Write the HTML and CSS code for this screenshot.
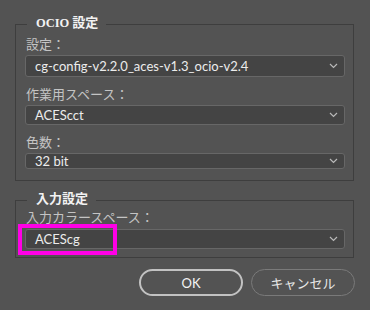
FILE: index.html
```html
<!DOCTYPE html>
<html lang="ja">
<head>
<meta charset="utf-8">
<link rel="stylesheet" href="styles.css">
</head>
<body>
<div class="dialog">
  <fieldset class="group group-ocio">
    <legend class="legend"><span class="legend-latin">OCIO</span> 設定</legend>
    <div class="field">
      <div class="label">設定：</div>
      <div class="select select-h22"><span class="value">cg-config-v2.2.0_aces-v1.3_ocio-v2.4</span><svg class="chev" width="9" height="6" viewBox="0 0 9 6"><polyline points="1,1 4.5,4.5 8,1" fill="none" stroke="#b9b9b9" stroke-width="1.2"/></svg></div>
    </div>
    <div class="field">
      <div class="label">作業用スペース：</div>
      <div class="select select-h20"><span class="value">ACEScct</span><svg class="chev" width="9" height="6" viewBox="0 0 9 6"><polyline points="1,1 4.5,4.5 8,1" fill="none" stroke="#b9b9b9" stroke-width="1.2"/></svg></div>
    </div>
    <div class="field">
      <div class="label">色数：</div>
      <div class="select select-h16"><span class="value">32 bit</span><svg class="chev" width="9" height="6" viewBox="0 0 9 6"><polyline points="1,1 4.5,4.5 8,1" fill="none" stroke="#b9b9b9" stroke-width="1.2"/></svg></div>
    </div>
  </fieldset>
  <fieldset class="group group-input">
    <legend class="legend">入力設定</legend>
    <div class="field">
      <div class="label label-tight">入力カラースペース：</div>
      <div class="select-wrap">
        <div class="select select-h20"><span class="value">ACEScg</span><svg class="chev" width="9" height="6" viewBox="0 0 9 6"><polyline points="1,1 4.5,4.5 8,1" fill="none" stroke="#b9b9b9" stroke-width="1.2"/></svg></div>
        <div class="highlight"></div>
      </div>
    </div>
  </fieldset>
  <div class="buttons">
    <button class="btn btn-primary">OK</button>
    <button class="btn">キャンセル</button>
  </div>
</div>
</body>
</html>
```
FILE: styles.css
```css
html, body {
  margin: 0;
  padding: 0;
  background: #535353;
}
body {
  width: 370px;
  height: 310px;
  overflow: hidden;
  font-family: "Noto Sans", "Noto Sans CJK JP", sans-serif;
  color: #e6e6e6;
}
.dialog {
  display: flex;
  flex-direction: column;
  padding: 13px 16px 0 15px;
}
.group {
  margin: 0;
  width: 339px;
  box-sizing: border-box;
  border: 1px solid #3e3e3e;
  padding: 0 8px 11px 9px;
  min-width: 0;
}
.group-input {
  margin-top: 8px;
  padding-bottom: 8px;
}
.legend {
  margin-left: 2px;
  padding: 0 8px 4px 9px;
  font-family: "Noto Sans CJK JP", sans-serif;
  font-weight: bold;
  font-size: 13px;
  line-height: 18px;
  color: #f2f2f2;
}
.legend-latin {
  font-family: "Liberation Serif", serif;
  font-weight: bold;
  font-size: 12.5px;
}
.field {
  display: flex;
  flex-direction: column;
  gap: 3px;
}
.field + .field {
  margin-top: 9px;
}
.label {
  font-family: "Noto Sans CJK JP", sans-serif;
  font-size: 13px;
  line-height: 16px;
  color: #c4c4c4;
  padding-left: 1px;
}
.label-tight {
  margin-top: -2px;
  margin-bottom: 1px;
}
.select {
  box-sizing: border-box;
  display: flex;
  align-items: center;
  justify-content: space-between;
  width: 320px;
  background: #444444;
  border: 1px solid #676767;
  border-radius: 3px;
  padding: 0 6px 0 9px;
}
.select-h22 { height: 22px; }
.select-h20 { height: 20px; }
.select-h16 { height: 16px; }
.value {
  font-family: "Lato", sans-serif;
  font-size: 13px;
  line-height: 14px;
  color: #ececec;
  white-space: nowrap;
}
.chev {
  display: block;
}
.select-wrap {
  position: relative;
}
.highlight {
  position: absolute;
  left: -7px;
  top: -5px;
  width: 99px;
  height: 31px;
  box-sizing: border-box;
  border: 4px solid #ff00e6;
}
.buttons {
  display: flex;
  justify-content: flex-end;
  gap: 8px;
  margin-top: 11px;
  margin-right: -1px;
}
.btn {
  box-sizing: border-box;
  width: 104px;
  height: 27px;
  border-radius: 14px;
  background: #535353;
  border: 1.5px solid #7a7a7a;
  color: #e8e8e8;
  font-family: "Lato", "Noto Sans CJK JP", sans-serif;
  font-size: 13px;
  padding: 0;
}
.btn-primary {
  border: 2px solid #c2c2c2;
  color: #f4f4f4;
}
```
